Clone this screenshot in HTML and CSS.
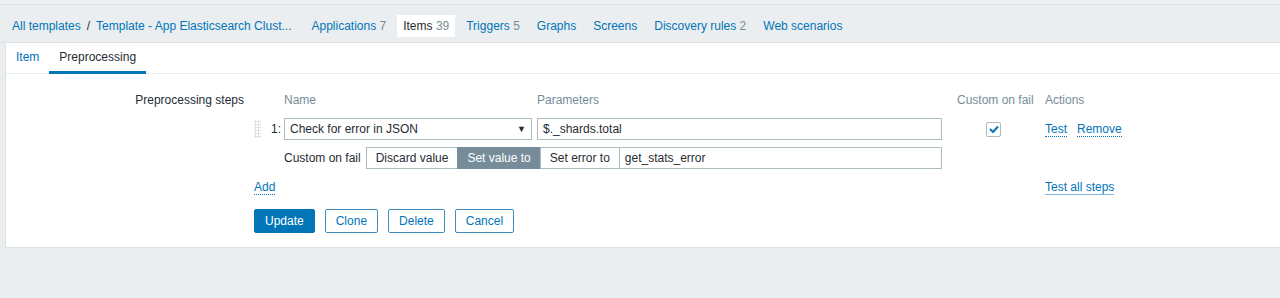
FILE: index.html
```html
<!DOCTYPE html>
<html lang="en">

<head>
    <meta charset="UTF-8" />
    <meta name="viewport" content="width=device-width, initial-scale=1.0" />
    <title>Item preprocessing</title>
    <link rel="stylesheet" href="styles.css">
</head>

<body>
    <div class="top-strip"></div>

    <nav class="object-nav">
        <div class="breadcrumbs">
            <a href="#">All templates</a>
            <span class="sep">/</span>
            <a href="#">Template - App Elasticsearch Clust...</a>
        </div>
        <a class="nav-item" href="#">Applications <span class="count">7</span></a>
        <a class="nav-item selected" href="#">Items <span class="count">39</span></a>
        <a class="nav-item" href="#">Triggers <span class="count">5</span></a>
        <a class="nav-item" href="#">Graphs</a>
        <a class="nav-item" href="#">Screens</a>
        <a class="nav-item" href="#">Discovery rules <span class="count">2</span></a>
        <a class="nav-item" href="#">Web scenarios</a>
    </nav>

    <div class="container">
        <ul class="tabs">
            <li><a href="#">Item</a></li>
            <li class="active"><a href="#">Preprocessing</a></li>
        </ul>

        <div class="form-body">
            <div class="form-row">
                <label class="form-label">Preprocessing steps</label>
                <div class="form-field">
                    <div class="steps">
                        <!-- header -->
                        <div></div>
                        <div></div>
                        <div class="th">Name</div>
                        <div class="th">Parameters</div>
                        <div class="th">Custom on fail</div>
                        <div class="th">Actions</div>

                        <!-- step 1 -->
                        <div class="drag"><span class="handle"></span></div>
                        <div class="num">1:</div>
                        <div>
                            <div class="select">Check for error in JSON <span class="arrow">▼</span></div>
                        </div>
                        <div><input class="text" type="text" value="$._shards.total" /></div>
                        <div class="check-cell">
                            <span class="checkbox">
                                <svg width="10" height="8" viewBox="0 0 10 8">
                                    <path d="M1 4 L4 7 L9 1.5" fill="none" stroke="#0275b8" stroke-width="2" />
                                </svg>
                            </span>
                        </div>
                        <div class="actions">
                            <a class="link" href="#">Test</a>
                            <a class="link" href="#">Remove</a>
                        </div>

                        <!-- step 1 custom on fail -->
                        <div></div>
                        <div></div>
                        <div class="fail-cell">
                            <div class="on-fail">
                                <span class="on-fail-label">Custom on fail</span>
                                <div class="radio-group">
                                    <span class="radio">Discard value</span>
                                    <span class="radio checked">Set value to</span>
                                    <span class="radio">Set error to</span>
                                </div>
                                <input class="text fail-value" type="text" value="get_stats_error" />
                            </div>
                        </div>
                        <div></div>
                        <div></div>

                        <!-- footer -->
                        <div class="add-cell"><a class="link" href="#">Add</a></div>
                        <div></div>
                        <div class="actions"><a class="link solid" href="#">Test all steps</a></div>
                    </div>

                    <div class="buttons">
                        <button class="btn primary">Update</button>
                        <button class="btn">Clone</button>
                        <button class="btn">Delete</button>
                        <button class="btn">Cancel</button>
                    </div>
                </div>
            </div>
        </div>
    </div>
</body>

</html>
```

FILE: styles.css
```css
/* Base */
* {
    box-sizing: border-box;
    margin: 0;
    padding: 0;
}

body {
    font-family: 'Liberation Sans', Arial, sans-serif;
    font-size: 12px;
    color: #1f2c33;
    background-color: #ebeef0;
}

a {
    color: #0275b8;
    text-decoration: none;
}

.top-strip {
    height: 5px;
    background-color: #eef0f2;
    border-bottom: 1px solid #dde2e5;
}

/* Object navigation */
.object-nav {
    display: flex;
    align-items: flex-start;
    height: 38px;
    padding: 10px 0 0 12px;
    border-bottom: 1px solid #dde2e5;
}

.breadcrumbs {
    display: flex;
    line-height: 22px;
    margin-right: 14px;
}

.breadcrumbs .sep {
    margin: 0 6px;
    color: #1f2c33;
}

.nav-item {
    line-height: 22px;
    padding: 0 6px;
    margin-right: 5px;
}

.nav-item.selected {
    background-color: #fff;
    color: #1f2c33;
}

.count {
    color: #768d99;
}

/* Container */
.container {
    margin-left: 5px;
    background-color: #fff;
    border: 1px solid #dde2e5;
    border-right: none;
    border-top: none;
    padding-bottom: 14px;
}

.tabs {
    display: flex;
    list-style: none;
    border-bottom: 1px solid #ebeef0;
}

.tabs li {
    border-bottom: 3px solid transparent;
    margin-bottom: -1px;
}

.tabs li a {
    display: block;
    padding: 0 10px;
    line-height: 28px;
}

.tabs li.active {
    border-bottom-color: #0275b8;
}

.tabs li.active a {
    color: #1f2c33;
}

/* Form */
.form-body {
    padding-top: 15px;
}

.form-row {
    display: flex;
}

.form-label {
    width: 238px;
    text-align: right;
    line-height: 22px;
    margin-right: 10px;
}

.steps {
    display: grid;
    grid-template-columns: 16px 14px 253px 420px 88px auto;
    grid-auto-rows: 22px;
    row-gap: 7px;
    align-items: center;
}

.th {
    color: #768d99;
}

.drag {
    height: 100%;
    display: flex;
    align-items: center;
}

.handle {
    display: block;
    width: 7px;
    height: 18px;
    background-image: radial-gradient(#dce2e5 1px, transparent 1.2px);
    background-size: 3px 3px;
}

.num {
    padding-left: 1px;
}

.select,
.text {
    height: 22px;
    border: 1px solid #acbbc2;
    background-color: #fff;
    font-family: inherit;
    font-size: 12px;
    color: #1f2c33;
    padding: 0 5px;
}

.select {
    width: 248px;
    display: flex;
    align-items: center;
    justify-content: space-between;
}

.select .arrow {
    font-size: 9px;
    color: #1f2c33;
}

.text {
    width: 405px;
    outline: none;
}

.check-cell {
    padding-left: 29px;
}

.checkbox {
    display: flex;
    align-items: center;
    justify-content: center;
    width: 15px;
    height: 15px;
    border: 1px solid #acbbc2;
    border-radius: 2px;
}

.actions {
    display: flex;
    gap: 10px;
}

.link {
    border-bottom: 1px dotted #0275b8;
    line-height: 14px;
}

.link.solid {
    border-bottom: 1px solid #7fb6da;
}

.fail-cell {
    grid-column: span 2;
}

.on-fail {
    display: flex;
    align-items: center;
    width: 658px;
}

.on-fail-label {
    margin-right: 5px;
    white-space: nowrap;
}

.radio-group {
    display: flex;
}

.radio {
    height: 22px;
    line-height: 20px;
    padding: 0 9px;
    border: 1px solid #acbbc2;
    border-right: none;
    white-space: nowrap;
}

.radio.checked {
    background-color: #768d99;
    border-color: #768d99;
    color: #fff;
}

.fail-value {
    flex: 1;
    width: auto;
}

.add-cell {
    grid-column: span 4;
}

/* Buttons */
.buttons {
    display: flex;
    gap: 10px;
    margin-top: 11px;
}

.btn {
    height: 24px;
    padding: 0 10px;
    font-family: inherit;
    font-size: 12px;
    color: #0275b8;
    background-color: #fff;
    border: 1px solid #3f8cbf;
    border-radius: 2px;
    cursor: pointer;
}

.btn.primary {
    color: #fff;
    background-color: #0275b8;
    border-color: #0275b8;
}
```
